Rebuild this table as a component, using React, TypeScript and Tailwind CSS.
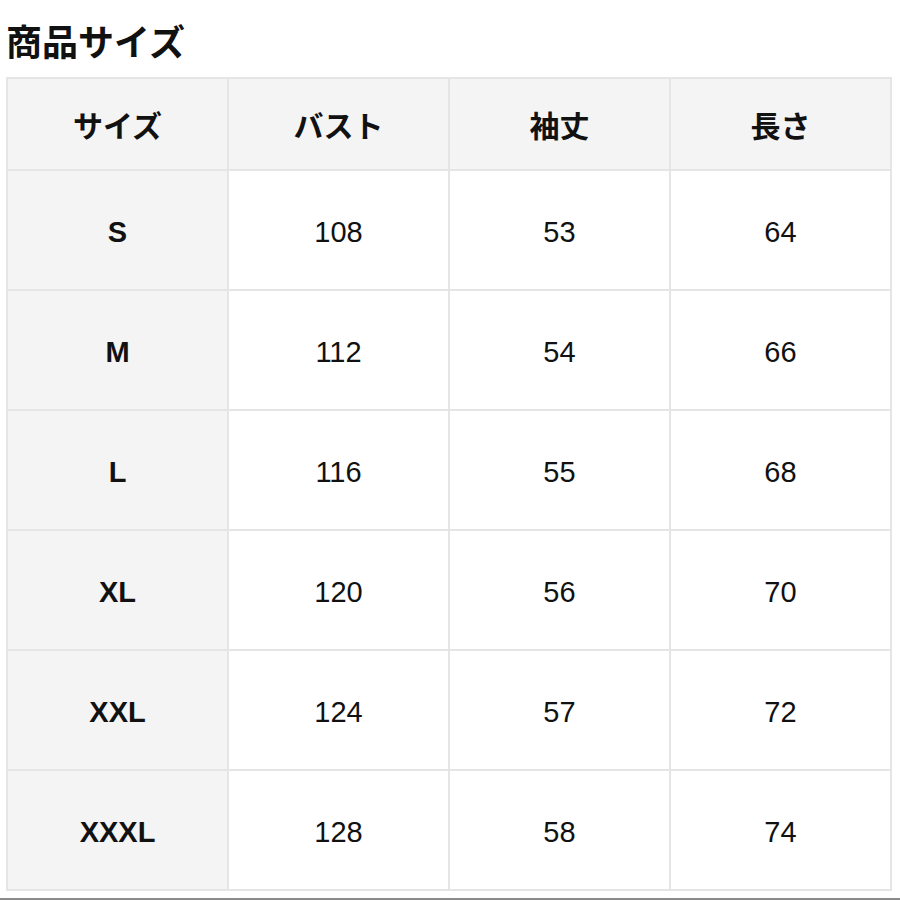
const headers = ["サイズ", "バスト", "袖丈", "長さ"];

const rows = [
  ["S", "108", "53", "64"],
  ["M", "112", "54", "66"],
  ["L", "116", "55", "68"],
  ["XL", "120", "56", "70"],
  ["XXL", "124", "57", "72"],
  ["XXXL", "128", "58", "74"],
];

const jp = "font-['Noto_Sans_CJK_JP',sans-serif]";
const latin = "font-['Liberation_Sans','Noto_Sans_CJK_JP',sans-serif]";

export default function App() {
  return (
    <div className="flex h-[900px] w-[900px] flex-col bg-white text-[#111]">
      <h1 className={`${jp} ml-[6px] mt-[22px] text-[36px] font-bold leading-[36px]`}>
        商品サイズ
      </h1>
      <div className="ml-[6px] mt-[19px] grid w-[886px] grid-cols-4 gap-[2px] bg-[#e5e5e5] p-[2px]">
        {headers.map((h) => (
          <div
            key={h}
            className={`${jp} flex h-[90px] items-center justify-center bg-[#f4f4f4] text-[30px] font-bold`}
          >
            {h}
          </div>
        ))}
        {rows.map((r) =>
          r.map((c, i) => (
            <div
              key={r[0] + i}
              className={`${latin} flex h-[118px] items-center justify-center pt-[5px] text-[29px] ${
                i === 0 ? "bg-[#f4f4f4] font-bold" : "bg-white"
              }`}
            >
              {c}
            </div>
          ))
        )}
      </div>
      <div className="mt-auto h-[2px] bg-[#8a8a8a]" />
    </div>
  );
}
